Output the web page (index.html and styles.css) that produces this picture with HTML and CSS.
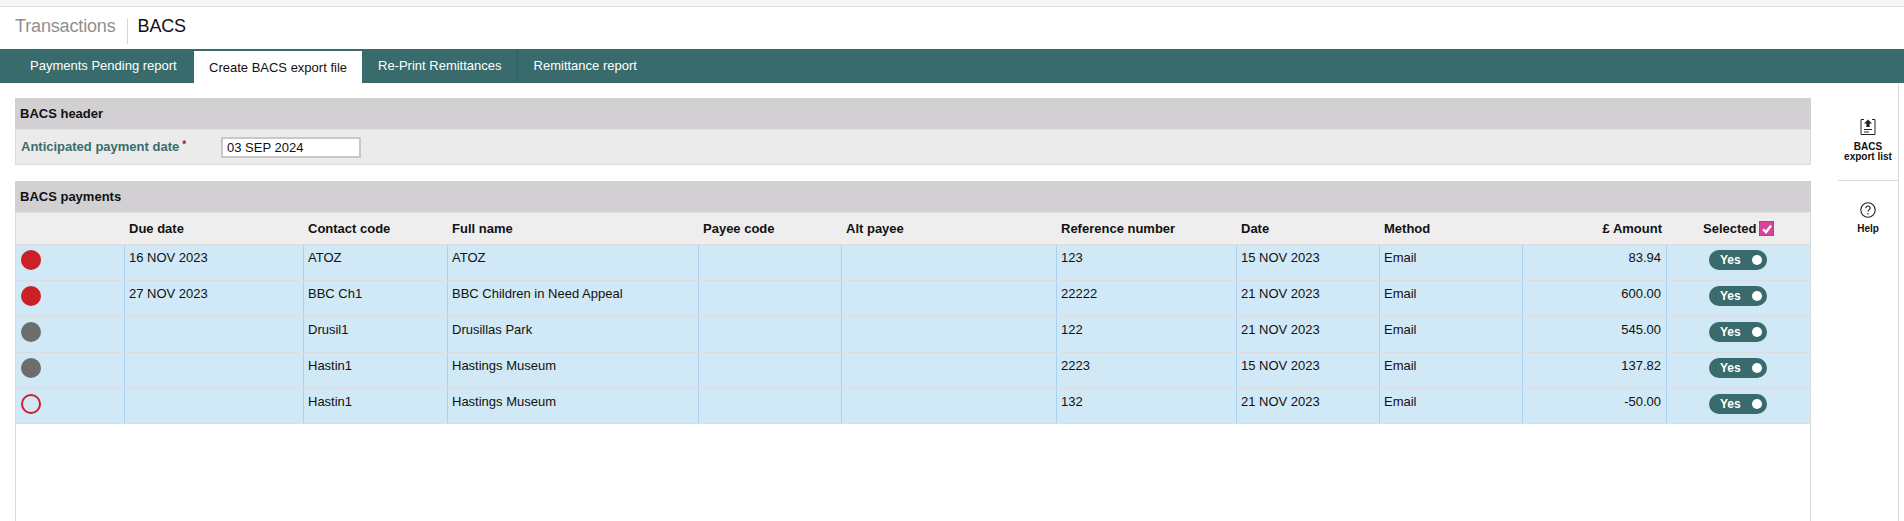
FILE: index.html
```html
<!DOCTYPE html>
<html lang="en">
<head>
<meta charset="utf-8">
<title>BACS</title>
<link rel="stylesheet" href="styles.css">
</head>
<body>
<div class="topstrip"></div>
<header class="titlebar">
  <span class="crumb">Transactions</span>
  <span class="title">BACS</span>
</header>
<nav class="tabs">
  <a class="tab tab-first">Payments Pending report</a>
  <a class="tab active">Create BACS export file</a>
  <a class="tab">Re-Print Remittances</a>
  <a class="tab tab-last">Remittance report</a>
</nav>
<div class="workspace">
  <main class="panel">
    <section class="section first">
      <h2 class="section-head">BACS header</h2>
      <div class="field-row">
        <label class="field-label">Anticipated payment date<sup class="req">*</sup></label>
        <input class="date-input" type="text" value="03 SEP 2024">
      </div>
    </section>
    <section class="section payments">
      <h2 class="section-head">BACS payments</h2>
      <div class="table-frame">
        <div class="grid grid-head">
          <div class="cell"></div>
          <div class="cell">Due date</div>
          <div class="cell">Contact code</div>
          <div class="cell">Full name</div>
          <div class="cell">Payee code</div>
          <div class="cell">Alt payee</div>
          <div class="cell">Reference number</div>
          <div class="cell">Date</div>
          <div class="cell">Method</div>
          <div class="cell num">£ Amount</div>
          <div class="cell sel">Selected<span class="check"><svg viewBox="0 0 12 12" width="12" height="12"><path d="M2.2 6.2 5 9.2 10 2.6" fill="none" stroke="#fff" stroke-width="2.4"/></svg></span></div>
        </div>
        <div class="grid row">
          <div class="cell"><span class="dot red"></span></div>
          <div class="cell">16 NOV 2023</div><div class="cell">ATOZ</div><div class="cell">ATOZ</div><div class="cell"></div><div class="cell"></div>
          <div class="cell">123</div><div class="cell">15 NOV 2023</div><div class="cell">Email</div><div class="cell num">83.94</div>
          <div class="cell toggle-cell"><span class="toggle">Yes<i class="knob"></i></span></div>
        </div>
        <div class="grid row">
          <div class="cell"><span class="dot red"></span></div>
          <div class="cell">27 NOV 2023</div><div class="cell">BBC Ch1</div><div class="cell">BBC Children in Need Appeal</div><div class="cell"></div><div class="cell"></div>
          <div class="cell">22222</div><div class="cell">21 NOV 2023</div><div class="cell">Email</div><div class="cell num">600.00</div>
          <div class="cell toggle-cell"><span class="toggle">Yes<i class="knob"></i></span></div>
        </div>
        <div class="grid row">
          <div class="cell"><span class="dot grey"></span></div>
          <div class="cell"></div><div class="cell">Drusil1</div><div class="cell">Drusillas Park</div><div class="cell"></div><div class="cell"></div>
          <div class="cell">122</div><div class="cell">21 NOV 2023</div><div class="cell">Email</div><div class="cell num">545.00</div>
          <div class="cell toggle-cell"><span class="toggle">Yes<i class="knob"></i></span></div>
        </div>
        <div class="grid row">
          <div class="cell"><span class="dot grey"></span></div>
          <div class="cell"></div><div class="cell">Hastin1</div><div class="cell">Hastings Museum</div><div class="cell"></div><div class="cell"></div>
          <div class="cell">2223</div><div class="cell">15 NOV 2023</div><div class="cell">Email</div><div class="cell num">137.82</div>
          <div class="cell toggle-cell"><span class="toggle">Yes<i class="knob"></i></span></div>
        </div>
        <div class="grid row last">
          <div class="cell"><span class="dot ring"></span></div>
          <div class="cell"></div><div class="cell">Hastin1</div><div class="cell">Hastings Museum</div><div class="cell"></div><div class="cell"></div>
          <div class="cell">132</div><div class="cell">21 NOV 2023</div><div class="cell">Email</div><div class="cell num">-50.00</div>
          <div class="cell toggle-cell"><span class="toggle">Yes<i class="knob"></i></span></div>
        </div>
      </div>
    </section>
  </main>
  <aside class="sidebar">
    <div class="side-item export">
      <svg class="side-icon" viewBox="0 0 16 16" width="16" height="16" fill="none" stroke="#222" stroke-width="1">
        <path d="M4 .5H1v15h14V.5H12"/>
        <path d="M8 .5 12 4.5H9.6V8H6.4V4.5H4Z" fill="#222" stroke="none"/>
        <path d="M4 10.5h8M4 13h5"/>
      </svg>
      <span class="side-label">BACS<br>export list</span>
    </div>
    <div class="side-item help">
      <svg class="side-icon" viewBox="0 0 16 16" width="16" height="16" fill="none" stroke="#222" stroke-width="1.1">
        <circle cx="8" cy="8" r="7.2"/>
        <path d="M5.8 6.2C5.8 4.8 6.8 4 8 4s2.2.8 2.2 2c0 1.6-2.2 1.7-2.2 3.6" stroke-width="1.2"/>
        <circle cx="8" cy="11.8" r=".8" fill="#222" stroke="none"/>
      </svg>
      <span class="side-label">Help</span>
    </div>
  </aside>
</div>
</body>
</html>
```
FILE: styles.css
```css
* { box-sizing: border-box; }
html, body { margin: 0; height: 100%; overflow: hidden; }
body {
  background: #fff;
  color: #111;
  font-family: "Liberation Sans", Arial, sans-serif;
  font-size: 13px;
  display: flex;
  flex-direction: column;
}
.topstrip { height: 7px; background: #f6f6f6; border-bottom: 1px solid #e2e2e2; flex: none; }
.titlebar {
  height: 42px;
  flex: none;
  display: flex;
  align-items: flex-start;
  padding: 11px 0 0 15px;
  font-size: 18px;
}
.crumb { color: #8f8f8f; padding-right: 11px; line-height: 16px; height: 26px; border-right: 1px solid #d6d6d6; letter-spacing: -.15px; }
.title { color: #111; padding-left: 10px; line-height: 16px; letter-spacing: -.2px; }
.tabs {
  height: 34px;
  flex: none;
  background: #396b6c;
  display: flex;
  align-items: flex-end;
  color: #fff;
}
.tab {
  height: 34px;
  line-height: 33px;
  padding: 0 15px 0 16px;
  border-right: 1px solid #315f60;
  white-space: nowrap;
}
.tab-first { width: 194px; padding-left: 30px; padding-right: 0; border-right: 0; }
.tab-last { border-right: 0; }
.tab.active {
  background: #fff;
  color: #111;
  height: 32px;
  line-height: 33px;
  width: 168px;
  padding: 0 0 0 15px;
  border: 0;
}
.workspace { flex: 1; display: flex; min-height: 0; padding-left: 15px; }
.panel {
  width: 1796px;
  flex: none;
  padding-top: 15px;
  display: flex;
  flex-direction: column;
}
.section { flex: none; margin-bottom: 16px; }
.payments { flex: 1; margin-bottom: 0; display: flex; flex-direction: column; }
.section-head {
  margin: 0;
  height: 32px;
  background: #d2d0d3;
  border-bottom: 1px solid #e0dfe1;
  font-size: 13px;
  line-height: 32px;
  padding-left: 5px;
  color: #111;
}
.field-row {
  height: 35px;
  background: #ebebeb;
  border: 1px solid #dcdcdc;
  border-top: 0;
  display: flex;
  align-items: center;
  padding-left: 5px;
}
.field-label { width: 200px; font-weight: bold; color: #396b6c; white-space: nowrap; line-height: 15px; padding-bottom: 1px; }
.req { color: #a3122a; font-size: 10px; line-height: 0; margin-left: 3px; position: relative; top: 2px; }
.date-input {
  width: 140px;
  height: 21px;
  border: 2px solid #c8c8c8;
  background: #fff;
  padding: 0 4px;
  font: 13px "Liberation Sans", Arial, sans-serif;
  color: #111;
  outline: none;
}
.table-frame { flex: 1; border-left: 1px solid #dcdcdc; border-right: 1px solid #dcdcdc; }
.grid {
  display: grid;
  grid-template-columns: 109px 179px 144px 251px 143px 215px 180px 143px 143px 144px 1fr;
}
.grid-head {
  height: 32px;
  background: #eeeeee;
  border-bottom: 1px solid #dcdcdc;
  font-weight: bold;
  line-height: 31px;
}
.grid-head .cell { padding-left: 4px; }
.grid-head .cell:first-child { padding: 0; }
.row {
  height: 36px;
  background: #d1e8f6;
  border-bottom: 1px solid #dbdcdf;
  line-height: 26px;
}
.row.last { height: 35px; }
.row .cell { border-right: 1px solid #a9d2f0; padding-left: 4px; white-space: nowrap; }
.row .cell:last-child { border-right: 0; }
.row .cell:first-child { padding: 5px 0 0 5px; line-height: 0; }
.grid .num { text-align: right; padding-right: 5px; }
.dot { display: inline-block; width: 20px; height: 20px; border-radius: 50%; }
.dot.red { background: #cc2027; }
.dot.grey { background: #6d6d6b; }
.dot.ring { border: 2px solid #cc2027; }
.grid-head .sel { display: flex; align-items: center; padding-left: 36px; }
.check {
  width: 15px;
  height: 15px;
  background: #d6449c;
  margin-left: 3px;
  outline: 1px dotted #396b6c;
  outline-offset: -1px;
  display: flex;
  align-items: center;
  justify-content: center;
}
.row .toggle-cell { padding-left: 42px; line-height: 20px; padding-top: 5px; }
.toggle {
  position: relative;
  display: block;
  width: 58px;
  height: 20px;
  border-radius: 10px;
  background: #396b6c;
  color: #fff;
  font-weight: bold;
  font-size: 12px;
  line-height: 20px;
  padding-left: 11px;
}
.knob {
  position: absolute;
  right: 5px;
  top: 5px;
  width: 10px;
  height: 10px;
  border-radius: 50%;
  background: #fff;
}
.sidebar {
  width: 88px;
  flex: none;
  border-right: 1px solid #dcdcdc;
  display: flex;
  flex-direction: column;
  padding-left: 27px;
  color: #111;
}
.side-item { display: flex; flex-direction: column; align-items: center; font-weight: bold; font-size: 10px; line-height: 10px; text-align: center; }
.export { height: 98px; padding-top: 36px; border-bottom: 1px solid #dcdcdc; }
.export .side-icon { margin-bottom: 7px; }
.help { padding-top: 21px; }
.help .side-icon { margin-bottom: 6px; }
.side-label { display: block; white-space: nowrap; }
```
